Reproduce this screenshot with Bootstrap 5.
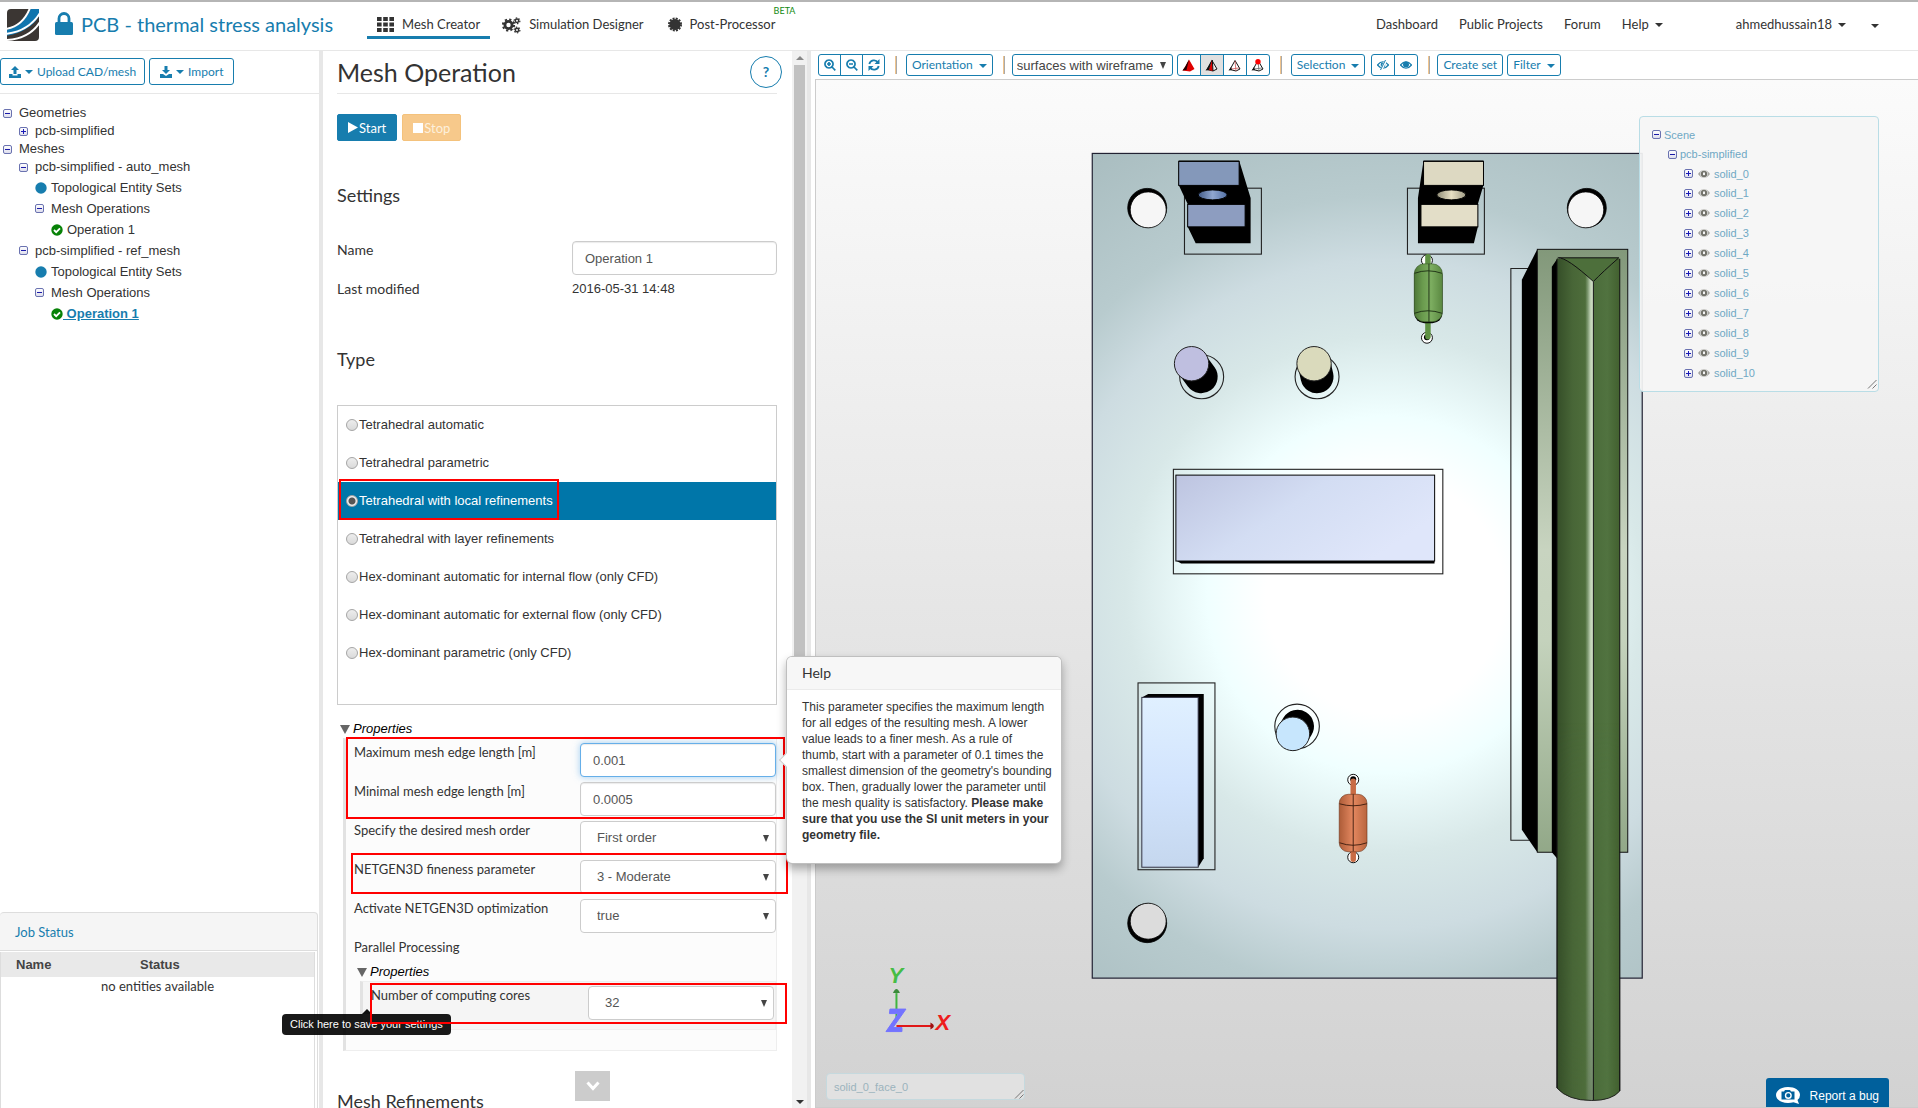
<!DOCTYPE html>
<html lang="en">
<head>
<meta charset="utf-8">
<meta name="viewport" content="width=device-width, initial-scale=1">
<title>PCB - thermal stress analysis</title>
<link href="https://cdn.jsdelivr.net/npm/bootstrap@5.3.0/dist/css/bootstrap.min.css" rel="stylesheet">
<style>
:root { --brand: #177dae; --rule: #e7e7e7; --ink: #333; }
body { font-family: "Liberation Sans", Arial, sans-serif; font-size: 13px; line-height: 18px; color: var(--ink); background: #fff; }
.lato { font-family: Lato, sans-serif; }
svg { display: block; flex: none; }
a { color: inherit; text-decoration: none; }
.crt { display: inline-block; width: 0; height: 0; border: 4px solid transparent; border-top-color: currentColor; border-bottom: 0; flex: none; }
.gap-caret { margin-left: 6px; margin-top: 2px; }

/* top bar */
.topbar { height: 51px; flex: none; border-top: 2px solid #b5b5b5; border-bottom: 1px solid var(--rule); font-size: 13px; line-height: 20px; padding: 0; }
.brand-mark { margin: 7px 0 0 7px; }
.proj { color: var(--brand); font-size: 20px; line-height: 24px; gap: 8px; margin: 10px 0 0 16px; height: 24px; }
.tab-list { margin-left: 34px; }
.tab-link { height: 37px; padding-top: 12px; gap: 8px; border-bottom: 3px solid transparent; position: relative; }
.tab-link svg { margin-top: 3px; }
.tab-link.active { border-color: var(--brand); padding-left: 10px; padding-right: 10px; }
.beta { position: absolute; right: -20px; top: 2px; font-size: 9px; line-height: 14px; color: #128a12; }
.usernav { gap: 21px; padding: 0 39px 8px 0; margin-top: 3px; }

/* outline buttons */
.btn-line { --bs-btn-color: var(--brand); --bs-btn-border-color: var(--brand); --bs-btn-bg: #fff; --bs-btn-border-radius: 3px; --bs-btn-hover-bg: #e7e7e7; --bs-btn-hover-color: var(--brand); --bs-btn-hover-border-color: var(--brand);
  --bs-btn-padding-x: 5px; --bs-btn-padding-y: 0px; --bs-btn-font-size: 12px; --bs-btn-line-height: 20px; font-family: Lato, sans-serif; display: inline-flex; align-items: center; justify-content: center; height: 22px; white-space: nowrap; }
.btn-line.tall { height: 27px; padding: 0 8px; gap: 4px; }
.btn-line.tall + .tall { padding: 0 10px; }
.btn-line.pressed { background: #e0e0e0; }
.btn-line.icon-only { width: 24px; }

/* columns */
.side { width: 319px; flex: none; }
.splitter { width: 4px; flex: none; background: var(--rule); }
.splitter i { width: 1px; height: 7px; background: #444; }
.tree { padding: 10px 0 0 3px; }
.tree-row { height: 18px; display: flex; align-items: center; }
.tall-row { height: 21px; }
.short-end { margin-bottom: 1px; }
.node { width: 16px; flex: none; }
.ind1 { padding-left: 16px; } .ind2 { padding-left: 32px; } .ind3 { padding-left: 48px; }
.side-tools { height: 43px; padding-top: 7px; border-bottom: 1px solid var(--rule); }
.job-box { border: 1px solid #ddd; border-left: 0; border-radius: 4px 4px 0 0; background: #f5f5f5; height: 196px; margin-right: 1px; }
.job-title { height: 38px; padding-left: 15px; font-size: 13px; line-height: 38px; color: var(--brand); border-bottom: 1px solid #ddd; }
.job-body { background: #fff; padding: 1px 2px 0 0; }
.job-frame { border: solid #ddd; border-width: 0 1px; }
.job-frame th { background: #e9e9e9; color: #444; padding: 0; height: 25px; }
.job-frame th:first-child { width: 139px; padding-left: 15px; }
.job-frame td { padding: 0; height: 18px; line-height: 18px; text-align: center; }

.panel { width: 469px; flex: none; padding: 0 15px 0 14px; position: relative; }
.panel-head { height: 43px; border-bottom: 1px solid var(--rule); }
.panel-head h1 { font-size: 25px; line-height: 42px; margin: 0; font-weight: 400; }
.btn-help { width: 32px; height: 32px; border-radius: 50%; border: 1px solid var(--brand); color: var(--brand); background: #fff; font-size: 14px; font-weight: 700; margin: 5px -5px 0 0; padding: 0; }
.run-row { margin-top: 20px; gap: 5px; }
.btn-run { --bs-btn-padding-x: 10px; --bs-btn-padding-y: 0px; --bs-btn-font-size: 13px; --bs-btn-line-height: 20px; --bs-btn-border-radius: 2px; height: 27px; display: inline-flex; align-items: center; gap: 1px; color: #fff; font-family: Lato, sans-serif; }
.btn-start { background: var(--brand); border-color: var(--brand); }
.btn-stop { background: #f7c98b !important; border-color: #f4c27c !important; opacity: 1 !important; color: #fdf0dc !important; }
h2.sec { font-size: 18px; line-height: 20px; font-weight: 400; margin: 0; }
.sec-settings { margin-top: 44px !important; }
.sec-type { margin-top: 30px !important; }
.sec-refine { margin-top: 40px !important; }
.settings { margin-top: 36px; }
.frow { display: grid; grid-template-columns: 235px 1fr; height: 39px; }
.frow label, .frow .flabel { font-family: Lato, sans-serif; font-size: 14px; line-height: 18px; }
.frow .form-control, .frow .form-select { height: 34px; font-size: 13px; line-height: 18px; color: #555; border: 1px solid #ccc; border-radius: 4px; padding: 7px 12px; box-shadow: inset 0 1px 1px rgba(0,0,0,.08); }
.frow .form-select { padding-left: 16px; box-shadow: none; background: #fff url("data:image/svg+xml,%3Csvg xmlns='http://www.w3.org/2000/svg' width='6' height='7'%3E%3Cpath d='M0 0H6L3 7Z' fill='%23444'/%3E%3C/svg%3E") no-repeat right 6px center; }
.frow .form-control.live { border-color: #66afe9; box-shadow: inset 0 1px 1px rgba(0,0,0,.08), 0 0 7px rgba(102,175,233,.6); }
.kinds { border: 1px solid #ccc; height: 300px; margin-top: 36px; }
.kinds label { display: flex; align-items: center; gap: 1px; height: 38px; padding-left: 8px; position: relative; }
.kinds label.on { background: #0076a9; color: #fff; }
.kinds input { appearance: none; width: 12px; height: 12px; margin: 0; border-radius: 50%; border: 1px solid #a5a5a5; background: linear-gradient(#ededed, #dadada); }
.kinds input:checked { background: radial-gradient(circle, #555 0 3px, #eee 4px); }
.redbox { position: absolute; border: 2px solid #f00; pointer-events: none; z-index: 30; }
.rb-kind { left: 1px; top: -3px; width: 220px; height: 41px; }
.legend-line { display: flex; align-items: center; gap: 3px; height: 19px; padding: 1px 0 0 3px; font-style: italic; color: #000; }
.panel > .legend-line { margin-top: 14px; }
.tri { width: 0; height: 0; border: 5px solid transparent; border-top: 9px solid #666; border-bottom: 0; }
.props { border: 1px solid #eee; border-left: 3px solid #e2e2e2; background: #fcfcfc; padding: 4px 0 20px 8px; margin-left: 6px; position: relative; }
.props .frow { grid-template-columns: 226px 1fr; }
.props .frow label, .sub-head { font-size: 13px; line-height: 18px; }
.sub-head { height: 24px; }
.props .props { background: #f5f5f5; padding: 4px 1px 4px 8px; }
.props .props .frow { grid-template-columns: 217px 1fr; }
.grp { position: relative; }
.rb-len { left: -8px; right: -9px; top: -6px; height: 82px; }
.rb-fine { left: -3px; right: -12px; top: -7px; height: 41px; }
.rb-core { left: -1px; right: -13px; top: -3px; height: 41px; }
.tip { position: absolute; left: -81px; top: 32px; background: rgba(0,0,0,.9); color: #fff; font-size: 11px; line-height: 15px; padding: 3px 8px; border-radius: 4px; white-space: nowrap; z-index: 20; }
.tip::before { content: ""; position: absolute; left: 80px; top: -5px; border: 5px solid transparent; border-top: 0; border-bottom-color: #111; }
.pop { position: absolute; left: 432px; top: -87px; width: 276px; background: #fff; border: 1px solid rgba(0,0,0,.25); border-radius: 6px; box-shadow: 0 5px 10px rgba(0,0,0,.3); z-index: 40; font-size: 12px; line-height: 16px; }
.pop h3 { font-size: 14px; line-height: 18px; font-weight: 400; margin: 0; padding: 7px 15px; background: #f7f7f7; border-bottom: 1px solid #ebebeb; border-radius: 5px 5px 0 0; }
.pop p { margin: 0; padding: 9px 4px 20px 15px; }
.pop::before { content: ""; position: absolute; left: -6px; top: 98px; width: 10px; height: 10px; transform: rotate(45deg); background: #fff; border: solid #ccc; border-width: 0 0 1px 1px; }
.pop::after { content: ""; position: absolute; left: 0; top: 90px; width: 10px; height: 26px; background: #fff; }
.more { position: absolute; left: 252px; bottom: 7px; width: 35px; height: 30px; border: 0; background: #ccc; padding: 0; display: flex; align-items: center; justify-content: center; }
.vscroll { width: 15px; flex: none; background: #f1f1f1; padding: 5px 2px 0; gap: 5px; }
.vscroll .thumb { width: 11px; flex: 0 0 693px; background: #c1c1c1; }
.up { border: 4px solid transparent; border-bottom-color: #888; border-top: 0; }

/* viewer */
.viewer { min-width: 0; padding-left: 4px; }
.tools { height: 28px; padding: 3px 0 0 3px; align-items: flex-start; }
.tools .icon-only.first { width: 23px; }
.vsep { width: 2px; height: 18px; margin: 2px 9px 0 10px; border-left: 1px solid #f0c48c; border-right: 1px solid #aaa; }
.vsep.tight { margin-right: 7px; }
.tools .form-select { width: 161px; height: 22px; border: 1px solid var(--brand); border-radius: 3px; padding: 1px 4px 0; font-size: 13px; line-height: 20px; color: #444; background: #fff url("data:image/svg+xml,%3Csvg xmlns='http://www.w3.org/2000/svg' width='6' height='7'%3E%3Cpath d='M0 0H6L3 7Z' fill='%23444'/%3E%3C/svg%3E") no-repeat right 6px center; }
.stage { border: 1px solid #ccc; border-right: 0; position: relative; min-height: 0; background: linear-gradient(#fbfbfb, #d2d2d2); overflow: hidden; }
.stage > svg { position: absolute; inset: 0; width: 100%; height: 100%; }
.stage text { font-family: "Liberation Sans", sans-serif; font-weight: 700; font-style: italic; }
.scene { position: absolute; right: 39px; top: 36px; width: 240px; height: 276px; padding: 8px 12px; border: 1px solid #b9dde6; border-radius: 4px; background: rgba(245,245,245,.93); color: #6fa8c4; font-size: 11px; }
.scene .tree-row { height: 20px; gap: 3px; }
.scene .tree-row:first-child { height: 19px; }
.scene .eye { margin: 0 1px 0 2px; }
.scene .grip { position: absolute; right: 1px; bottom: 2px; }
.pick { position: absolute; left: 10px; bottom: 7px; width: 199px; height: 27px; }
.pick textarea { width: 100%; height: 100%; resize: none; overflow: hidden; border: 1px solid #c5d9de; border-radius: 4px; background: #e1e1e1; color: #9bb3bd; font-size: 11px; line-height: 16px; padding: 5px 7px; display: block; }
.pick svg { position: absolute; right: 1px; bottom: 1px; }
.btn-bug { position: absolute; right: 29px; bottom: 0; height: 29px; border: 0; border-radius: 3px 3px 0 0; background: #00609c; color: #fff; font-size: 12px; padding: 6px 10px 0; display: flex; align-items: center; gap: 10px; }
</style>
<script src="https://cdn.jsdelivr.net/npm/bootstrap@5.3.0/dist/js/bootstrap.bundle.min.js"></script>
</head>
<body class="vh-100 overflow-hidden d-flex flex-column">

<svg width="0" height="0" class="position-absolute" aria-hidden="true">
  <defs>
    <linearGradient id="boxg" x1="0" y1="0" x2="0" y2="1"><stop offset="0" stop-color="#fff"/><stop offset="1" stop-color="#dcdcec"/></linearGradient>
    <symbol id="minus" viewBox="0 0 9 9"><rect x=".5" y=".5" width="8" height="8" rx="1.500" fill="url(#boxg)" stroke="#6a72b0"/><path d="M2 4.500h5" stroke="#1a1aa8"/></symbol>
    <symbol id="plus" viewBox="0 0 9 9"><rect x=".5" y=".5" width="8" height="8" rx="1.500" fill="url(#boxg)" stroke="#6a72b0"/><path d="M2 4.500h5M4.500 2v5" stroke="#1a1ab8"/></symbol>
    <symbol id="dot" viewBox="0 0 12 12"><circle cx="6" cy="6" r="5.700" fill="#177dae"/></symbol>
    <symbol id="okay" viewBox="0 0 12 12"><circle cx="6" cy="6" r="5.700" fill="#078207"/><path d="M3 6l2.200 2.200L9 4.400" fill="none" stroke="#fff" stroke-width="1.800"/></symbol>
    <symbol id="eye" viewBox="0 0 12 10"><path d="M0 5Q6-3 12 5Q6 13 0 5Z" fill="#a5a5a0"/><circle cx="6" cy="5" r="3.700" fill="#f4f4f4"/><circle cx="6" cy="5" r="3.200" fill="#73736b"/><rect x="5" y="3.500" width="2" height="2.600" fill="#f4f4f4"/></symbol>
    <symbol id="grip" viewBox="0 0 10 10"><path d="M1 9.500L9.500 1M5.500 9.500L9.500 5.500" stroke="#777" fill="none"/></symbol>
  </defs>
</svg>

<nav class="topbar lato d-flex">
  <a href="#" class="brand-mark" aria-label="Home">
    <svg width="32" height="32" viewBox="0 0 32 32"><defs><clipPath id="lg"><path d="M4 0H32V28Q32 32 28 32H0V4Q0 0 4 0Z"/></clipPath></defs><g clip-path="url(#lg)"><rect width="32" height="32" fill="#3b3633"/><path d="M-1 21Q17 17 24-1H33V5Q25 22-1 27Z" fill="#0f75ae"/><path d="M-1 20Q16 17 23-1M-1 25Q22 22 33 4M-1 31Q22 30 33 13" fill="none" stroke="#fff" stroke-width="2"/></g></svg>
  </a>
  <a href="#" class="proj d-flex">
    <svg width="18" height="24" viewBox="0 0 18 24"><path d="M4 11V6.500a5 5 0 0 1 10 0V11" fill="none" stroke="#177dae" stroke-width="2.800"/><rect y="10" width="18" height="13" rx="1.500" fill="#177dae"/></svg>
    <span>PCB - thermal stress analysis</span>
  </a>
  <div class="tab-list d-flex">
    <a href="#" class="tab-link active d-flex"><svg width="17" height="15" viewBox="0 0 17 15"><path d="M0 0h4.600v4H0zM6.200 0h4.600v4H6.200zM12.400 0H17v4h-4.600zM0 5.500h4.600v4H0zM6.200 5.500h4.600v4H6.200zM12.400 5.500H17v4h-4.600zM0 11h4.600v4H0zM6.200 11h4.600v4H6.200zM12.400 11H17v4h-4.600z" fill="#333"/></svg>Mesh Creator</a>
    <a href="#" class="tab-link d-flex ms-2 ps-1"><svg width="19" height="17" viewBox="0 0 19 17"><g fill="none" stroke="#333"><circle cx="6.500" cy="8" r="3.600" stroke-width="2.800"/><circle cx="6.500" cy="8" r="5.600" stroke-width="2" stroke-dasharray="2.200 2.200"/><circle cx="15" cy="3.800" r="1.700" stroke-width="1.500"/><circle cx="15" cy="3.800" r="2.900" stroke-width="1.200" stroke-dasharray="1.500 1.500"/><circle cx="15" cy="13" r="1.700" stroke-width="1.500"/><circle cx="15" cy="13" r="2.900" stroke-width="1.200" stroke-dasharray="1.500 1.500"/></g></svg>Simulation Designer</a>
    <a href="#" class="tab-link d-flex ms-4"><svg width="14" height="15" viewBox="0 0 14 15"><circle cx="7" cy="7.500" r="5.500" fill="#333"/><circle cx="7" cy="7.500" r="6" fill="none" stroke="#333" stroke-width="2" stroke-dasharray="2 1.140"/></svg>Post-Processor<span class="beta">BETA</span></a>
  </div>
  <div class="usernav d-flex ms-auto align-items-center">
    <a href="#">Dashboard</a><a href="#">Public Projects</a><a href="#">Forum</a>
    <a href="#" class="d-flex align-items-center">Help<span class="crt gap-caret"></span></a>
    <a href="#" class="d-flex align-items-center ms-5 ps-1">ahmedhussain18<span class="crt gap-caret"></span></a>
    <a href="#" class="d-flex ms-1" aria-label="Menu"><span class="crt mt-1"></span></a>
  </div>
</nav>

<main class="d-flex flex-grow-1" style="min-height:0">

  <aside class="side d-flex flex-column">
    <div class="side-tools d-flex gap-1">
      <button class="btn btn-line tall" type="button"><svg width="12" height="12" viewBox="0 0 12 12"><path d="M6 0l4 4H7.500v4h-3V4H2z M0 8h3.500v1.500h5V8H12v4H0z" fill="#177dae"/></svg><span class="crt"></span>Upload CAD/mesh</button>
      <button class="btn btn-line tall" type="button"><svg width="12" height="12" viewBox="0 0 12 12"><path d="M6 8L2 4h2.500V0h3v4H10z M0 8h3l3 2 3-2h3v4H0z" fill="#177dae"/></svg><span class="crt"></span>Import</button>
    </div>
    <div class="tree flex-grow-1">
      <div class="tree-row"><span class="node"><svg width="9" height="9"><use href="#minus"/></svg></span>Geometries</div>
      <div class="tree-row ind1"><span class="node"><svg width="9" height="9"><use href="#plus"/></svg></span>pcb-simplified</div>
      <div class="tree-row"><span class="node"><svg width="9" height="9"><use href="#minus"/></svg></span>Meshes</div>
      <div class="tree-row ind1 short-end"><span class="node"><svg width="9" height="9"><use href="#minus"/></svg></span>pcb-simplified - auto_mesh</div>
      <div class="tree-row tall-row ind2"><span class="node"><svg width="12" height="12"><use href="#dot"/></svg></span>Topological Entity Sets</div>
      <div class="tree-row tall-row ind2"><span class="node"><svg width="9" height="9"><use href="#minus"/></svg></span>Mesh Operations</div>
      <div class="tree-row tall-row ind3"><span class="node"><svg width="12" height="12"><use href="#okay"/></svg></span>Operation 1</div>
      <div class="tree-row tall-row ind1"><span class="node"><svg width="9" height="9"><use href="#minus"/></svg></span>pcb-simplified - ref_mesh</div>
      <div class="tree-row tall-row ind2"><span class="node"><svg width="12" height="12"><use href="#dot"/></svg></span>Topological Entity Sets</div>
      <div class="tree-row tall-row ind2"><span class="node"><svg width="9" height="9"><use href="#minus"/></svg></span>Mesh Operations</div>
      <a href="#" class="tree-row tall-row ind3 fw-bold" style="color:var(--brand)"><svg width="12" height="12"><use href="#okay"/></svg><span class="text-decoration-underline" style="white-space:pre"> Operation 1</span></a>
    </div>
    <section class="job-box">
      <div class="job-title lato">Job Status</div>
      <div class="job-body h-100"><div class="job-frame h-100">
        <table class="w-100">
          <thead><tr><th>Name</th><th>Status</th></tr></thead>
          <tbody><tr><td colspan="2" class="lato">no entities available</td></tr></tbody>
        </table>
      </div></div>
    </section>
  </aside>
  <div class="splitter d-flex align-items-center justify-content-center gap-1"><i></i><i></i></div>

  <section class="panel">
    <div class="panel-head lato d-flex justify-content-between">
      <h1>Mesh Operation</h1>
      <button class="btn-help" type="button">?</button>
    </div>
    <div class="run-row d-flex">
      <button class="btn btn-run btn-start" type="button"><svg width="10" height="11" viewBox="0 0 10 11"><path d="M0 0L10 5.500L0 11Z" fill="#fff"/></svg>Start</button>
      <button class="btn btn-run btn-stop" type="button" disabled><svg width="10" height="10"><rect width="10" height="10" fill="#fff"/></svg>Stop</button>
    </div>
    <h2 class="sec sec-settings lato">Settings</h2>
    <div class="settings">
      <div class="frow"><label for="nm">Name</label><input id="nm" class="form-control" value="Operation 1"></div>
      <div class="frow"><span class="flabel">Last modified</span><span>2016-05-31 14:48</span></div>
    </div>
    <h2 class="sec sec-type lato">Type</h2>
    <div class="kinds">
      <label><input type="radio" name="kind">Tetrahedral automatic</label>
      <label><input type="radio" name="kind">Tetrahedral parametric</label>
      <label class="on"><input type="radio" name="kind" checked>Tetrahedral with local refinements<span class="redbox rb-kind"></span></label>
      <label><input type="radio" name="kind">Tetrahedral with layer refinements</label>
      <label><input type="radio" name="kind">Hex-dominant automatic for internal flow (only CFD)</label>
      <label><input type="radio" name="kind">Hex-dominant automatic for external flow (only CFD)</label>
      <label><input type="radio" name="kind">Hex-dominant parametric (only CFD)</label>
    </div>
    <div class="legend-line"><span class="tri"></span>Properties</div>
    <div class="props">
      <div class="grp">
        <div class="frow"><label for="mx">Maximum mesh edge length [m]</label><input id="mx" class="form-control live" value="0.001"></div>
        <div class="frow"><label for="mn">Minimal mesh edge length [m]</label><input id="mn" class="form-control" value="0.0005"></div>
        <span class="redbox rb-len"></span>
        <div class="pop" role="tooltip"><h3 class="lato">Help</h3><p>This parameter specifies the maximum length<br>for all edges of the resulting mesh. A lower<br>value leads to a finer mesh. As a rule of<br>thumb, start with a parameter of 0.1 times the<br>smallest dimension of the geometry's bounding<br>box. Then, gradually lower the parameter until<br>the mesh quality is satisfactory. <b>Please make<br>sure that you use the SI unit meters in your<br>geometry file.</b></p></div>
      </div>
      <div class="frow"><label for="od">Specify the desired mesh order</label><select id="od" class="form-select"><option>First order</option></select></div>
      <div class="grp">
        <div class="frow"><label for="fn">NETGEN3D fineness parameter</label><select id="fn" class="form-select"><option>3 - Moderate</option></select></div>
        <span class="redbox rb-fine"></span>
      </div>
      <div class="frow"><label for="op">Activate NETGEN3D optimization</label><select id="op" class="form-select"><option>true</option></select></div>
      <div class="sub-head lato">Parallel Processing</div>
      <div class="legend-line"><span class="tri"></span>Properties</div>
      <div class="props">
        <div class="grp">
          <div class="frow"><label for="cr">Number of computing cores</label><select id="cr" class="form-select"><option>32</option></select></div>
          <span class="redbox rb-core"></span>
        </div>
        <div class="tip" role="tooltip">Click here to save your settings</div>
      </div>
    </div>
    <h2 class="sec sec-refine lato">Mesh Refinements</h2>
    <button class="more" type="button" aria-label="More"><svg width="14" height="10" viewBox="0 0 14 10"><path d="M1.500 1.500L7 7.500L12.500 1.500" fill="none" stroke="#fff" stroke-width="3"/></svg></button>
  </section>
  <div class="vscroll d-flex flex-column align-items-center">
    <span class="up"></span><span class="thumb"></span><span class="crt mt-auto mb-1"></span>
  </div>
  <div class="splitter d-flex align-items-center justify-content-center gap-1"><i></i><i></i></div>

  <section class="viewer d-flex flex-column flex-grow-1">
    <div class="tools d-flex">
      <div class="btn-group">
        <button class="btn btn-line icon-only first" type="button" aria-label="Zoom in"><svg width="12" height="12" viewBox="0 0 12 12"><path d="M5 1a4 4 0 1 0 .01 0M8 8l3.300 3.300M3 5h4M5 3v4" fill="none" stroke="#177dae" stroke-width="1.700"/></svg></button>
        <button class="btn btn-line icon-only first" type="button" aria-label="Zoom out"><svg width="12" height="12" viewBox="0 0 12 12"><path d="M5 1a4 4 0 1 0 .01 0M8 8l3.300 3.300M3 5h4" fill="none" stroke="#177dae" stroke-width="1.700"/></svg></button>
        <button class="btn btn-line icon-only first" type="button" aria-label="Reset view"><svg width="12" height="12" viewBox="0 0 12 12"><path d="M1.300 5A4.800 4.800 0 0 1 10 3.500M10.700 7A4.800 4.800 0 0 1 2 8.500" fill="none" stroke="#177dae" stroke-width="1.800"/><path d="M11.500 0v5h-5zM.5 12V7h5z" fill="#177dae"/></svg></button>
      </div>
      <span class="vsep"></span>
      <button class="btn btn-line" type="button">Orientation<span class="crt gap-caret"></span></button>
      <span class="vsep tight"></span>
      <select class="form-select" aria-label="Render mode"><option>surfaces with wireframe</option></select>
      <div class="btn-group ms-1">
        <button class="btn btn-line icon-only" type="button" aria-label="Pick volumes"><svg width="13" height="13" viewBox="0 0 13 13"><path d="M7 .5L3 8L.5 11.500L8 12.500L12.500 10Z" fill="#e00000"/><path d="M7 .5L3 8L.5 11.500L4.500 11Z" fill="#200"/></svg></button>
        <button class="btn btn-line icon-only pressed" type="button" aria-label="Pick faces"><svg width="13" height="13" viewBox="0 0 13 13"><path d="M7 1.500L2 10.500L8 12L12 10Z" fill="#eee" stroke="#111"/><path d="M7 1L3.500 11L8 12Z" fill="#d00"/><path d="M7 .5L3 8L.5 11.500L4 11Z" fill="#111"/><path d="M7.300 1L8 12" stroke="#111"/></svg></button>
        <button class="btn btn-line icon-only" type="button" aria-label="Pick edges"><svg width="13" height="13" viewBox="0 0 13 13"><path d="M7 1.500L2 10.500L8 12L12 10Z" fill="#fff" stroke="#111"/><path d="M7 2L8 12M3 10L11 9" stroke="#c55" stroke-width=".8"/><path d="M3 8L.5 11.500L4 11Z" fill="#111"/></svg></button>
        <button class="btn btn-line icon-only" type="button" aria-label="Pick vertices"><svg width="13" height="13" viewBox="0 0 13 13"><path d="M7 1.500L2 10.500L8 12L12 10Z" fill="#fff" stroke="#111"/><path d="M7 2L8 12M3 10L11 9" stroke="#666" stroke-width=".8"/><path d="M3 8L.5 11.500L4 11Z" fill="#111"/><circle cx="7" cy="2.700" r="2.700" fill="#f00"/></svg></button>
      </div>
      <span class="vsep"></span>
      <button class="btn btn-line" type="button">Selection<span class="crt gap-caret"></span></button>
      <div class="btn-group" style="margin-left:6px">
        <button class="btn btn-line icon-only" type="button" aria-label="Hide"><svg width="12" height="10" viewBox="0 0 12 10"><path d="M.5 5Q6-1.500 11.500 5Q6 11.500 .5 5Z" fill="none" stroke="#177dae" stroke-width="1.200"/><circle cx="6" cy="5" r="2.400" fill="#177dae"/><path d="M9 0L4 10" stroke="#fff" stroke-width="2.500"/><path d="M8.500 0L3.500 10" stroke="#177dae"/></svg></button>
        <button class="btn btn-line icon-only" type="button" aria-label="Show"><svg width="12" height="10" viewBox="0 0 12 10"><path d="M.5 5Q6-1.500 11.500 5Q6 11.500 .5 5Z" fill="none" stroke="#177dae" stroke-width="1.200"/><circle cx="6" cy="4.600" r="3" fill="#177dae"/></svg></button>
      </div>
      <span class="vsep tight"></span>
      <button class="btn btn-line" type="button">Create set</button>
      <button class="btn btn-line ms-1" type="button">Filter<span class="crt gap-caret"></span></button>
    </div>

    <div class="stage flex-grow-1">
      <svg viewBox="816 80 1102 1028" preserveAspectRatio="xMidYMin meet" role="img" aria-label="PCB model">
        <defs>
          <radialGradient id="plate" gradientUnits="userSpaceOnUse" cx="1385" cy="595" r="540"><stop offset="0" stop-color="#fff"/><stop offset=".22" stop-color="#fff"/><stop offset=".33" stop-color="#f0ffff"/><stop offset=".48" stop-color="#d8e8e8"/><stop offset=".62" stop-color="#cddce1"/><stop offset=".74" stop-color="#b8cbce"/><stop offset="1" stop-color="#a8bcbf"/></radialGradient>
          <linearGradient id="tube"><stop offset="0" stop-color="#354e28"/><stop offset=".25" stop-color="#486637"/><stop offset=".45" stop-color="#4e6d3b"/><stop offset=".49" stop-color="#7d9870"/><stop offset=".53" stop-color="#bccdb1"/><stop offset=".58" stop-color="#dbe8d2"/><stop offset=".585" stop-color="#4b6c3a"/><stop offset=".8" stop-color="#517340"/><stop offset="1" stop-color="#42602f"/></linearGradient>
          <linearGradient id="tubelow"><stop offset="0" stop-color="#354e28"/><stop offset=".25" stop-color="#486637"/><stop offset=".45" stop-color="#4e6d3b"/><stop offset=".5" stop-color="#66805a"/><stop offset=".58" stop-color="#71886a"/><stop offset=".585" stop-color="#4b6c3a"/><stop offset=".8" stop-color="#517340"/><stop offset="1" stop-color="#42602f"/></linearGradient>
          <linearGradient id="fade" x1="0" y1="0" x2="0" y2="1"><stop offset="0" stop-color="#000"/><stop offset=".55" stop-color="#000"/><stop offset="1" stop-color="#fff"/></linearGradient>
          <mask id="lowm" maskUnits="userSpaceOnUse" x="1550" y="250" width="80" height="860"><rect x="1550" y="250" width="80" height="860" fill="url(#fade)"/></mask>
          <linearGradient id="slab" x1="0" y1="0" x2="0" y2="1"><stop offset="0" stop-color="#82987a"/><stop offset=".5" stop-color="#c8d4c0"/><stop offset=".65" stop-color="#c4d2bc"/><stop offset="1" stop-color="#92a888"/></linearGradient>
          <linearGradient id="chip" x1="0" y1="0" x2="1" y2=".5"><stop offset="0" stop-color="#bdc4e0"/><stop offset=".5" stop-color="#d3ddf3"/><stop offset="1" stop-color="#dfe6fa"/></linearGradient>
          <linearGradient id="chip2" x1="0" y1="0" x2="0" y2="1"><stop offset="0" stop-color="#e0f0ff"/><stop offset=".5" stop-color="#d2e4fd"/><stop offset="1" stop-color="#c5d7ee"/></linearGradient>
          <linearGradient id="gr"><stop offset="0" stop-color="#4d7637"/><stop offset=".3" stop-color="#6a9b4e"/><stop offset=".6" stop-color="#7cad60"/><stop offset="1" stop-color="#5a8841"/></linearGradient>
          <linearGradient id="or"><stop offset="0" stop-color="#ad5c38"/><stop offset=".5" stop-color="#e48860"/><stop offset="1" stop-color="#b9653e"/></linearGradient>
          <linearGradient id="hb"><stop offset="0" stop-color="#425b88"/><stop offset=".5" stop-color="#90a7d0"/><stop offset="1" stop-color="#5270a4"/></linearGradient>
          <linearGradient id="hy"><stop offset="0" stop-color="#918e78"/><stop offset=".5" stop-color="#e8e0c4"/><stop offset="1" stop-color="#a09c86"/></linearGradient>
        </defs>
        <rect x="1092" y="153.500" width="550.500" height="825.500" fill="url(#plate)" stroke="#223" stroke-width="1.200"/>
        <g stroke="#000" stroke-width=".8">
          <circle cx="1147" cy="208" r="19.500"/><circle cx="1148" cy="210" r="18" fill="#f6f6f6"/>
          <circle cx="1587" cy="208" r="19.500"/><circle cx="1586" cy="210" r="18" fill="#f6f6f6"/>
          <circle cx="1147" cy="924" r="19.500"/><circle cx="1148" cy="922" r="18" fill="#dcdcdc"/>
        </g>
        <g fill="none" stroke="#222" stroke-width="1.100">
          <rect x="1184.300" y="188.300" width="77" height="66"/><rect x="1407.500" y="188.300" width="77" height="66"/>
          <rect x="1173.200" y="469.700" width="269.700" height="104.600"/><rect x="1137.800" y="683.500" width="77" height="187"/>
          <path d="M1530 268.700H1511V841H1530"/>
          <circle cx="1201.500" cy="377" r="22"/><circle cx="1317" cy="377" r="22"/><circle cx="1297" cy="727" r="22.300"/>
        </g>
        <path d="M1178.500 160.700H1239L1250.500 198V243.500H1195.500L1187.500 227V204L1178.500 185Z"/>
        <path d="M1423.600 160.700H1483.600V185L1478 204V227L1474 243.500H1418V198Z"/>
        <g stroke="#000">
          <rect x="1178.500" y="161.500" width="60.500" height="24" fill="#8498ba"/><rect x="1187.500" y="204.500" width="57.500" height="22.500" fill="#8d9dc0"/>
          <rect x="1423.600" y="161.500" width="60" height="24" fill="#ddd9c2"/><rect x="1421" y="204.500" width="57" height="22.500" fill="#e3dec8"/>
          <ellipse cx="1212.500" cy="195" rx="14.500" ry="5" fill="url(#hb)"/><ellipse cx="1451.400" cy="195" rx="14.500" ry="5" fill="url(#hy)"/>
        </g>
        <path d="M1191.400 364L1201 377" stroke="#000" stroke-width="33" stroke-linecap="round"/>
        <path d="M1314 364L1317 377" stroke="#000" stroke-width="33" stroke-linecap="round"/>
        <path d="M1292.800 734.500L1297.400 727" stroke="#000" stroke-width="33" stroke-linecap="round"/>
        <g stroke="#222"><circle cx="1191.400" cy="364" r="17.200" fill="#bfbfe0"/><circle cx="1314" cy="364" r="17.200" fill="#dadabc"/><circle cx="1292.800" cy="734.500" r="16.800" fill="#c7e6fd"/></g>
        <path d="M1175.700 561L1181 564H1434.600V561Z"/>
        <rect x="1175.700" y="475.500" width="259" height="86" fill="url(#chip)" stroke="#000"/>
        <path d="M1141.600 698L1148 694.500H1203.600V859L1198 868Z"/>
        <rect x="1141.600" y="698" width="56.400" height="170" fill="url(#chip2)" stroke="#334"/>
        <g>
          <circle cx="1427" cy="260.500" r="5.500" fill="#fff" stroke="#111"/><circle cx="1427" cy="338" r="5.500" fill="#fff" stroke="#111"/><circle cx="1427" cy="337.500" r="3"/>
          <path d="M1428 257v8M1428 321v16" stroke="#5e9143" stroke-width="5.500" stroke-linecap="round"/>
          <rect x="1414.300" y="265" width="28.200" height="58.500" rx="10"/>
          <rect x="1414.300" y="264" width="28.200" height="58" rx="10" fill="url(#gr)" stroke="#3b5b2a" stroke-width=".6"/>
          <path d="M1414.500 273.500Q1428 268.500 1442 273.500M1414.500 313.500Q1428 308.500 1442 313.500M1429 264v58" fill="none" stroke="#1b2b12" stroke-width=".9"/>
        </g>
        <g>
          <circle cx="1353.200" cy="780.500" r="5.500" fill="#fff" stroke="#111"/><circle cx="1353.200" cy="858" r="5.500" fill="#fff" stroke="#111"/><circle cx="1353.200" cy="780" r="3"/>
          <path d="M1353.200 782v12M1353.200 850v10" stroke="#c96c45" stroke-width="5.500" stroke-linecap="round"/>
          <rect x="1339.200" y="795" width="27.800" height="57.500" rx="9" fill="url(#or)" stroke="#6b3319" stroke-width=".6"/>
          <path d="M1339.500 804.500Q1353 808.500 1367 804.500M1339.500 843.500Q1353 848.500 1367 843.500M1353.200 795v57" fill="none" stroke="#3a1a0c" stroke-width=".9"/>
        </g>
        <path d="M1537.500 249.300L1522 280V830.500L1537.500 853Z"/>
        <rect x="1537.500" y="249.500" width="90.500" height="603.500" fill="url(#slab)" stroke="#111"/>
        <path d="M1558.500 257.500L1552 267V853L1558 860V257Z"/>
        <path d="M1557.200 259H1620V1092Q1612 1101.500 1592 1101.500Q1568 1101.500 1557.200 1089Z" fill="url(#tube)"/>
        <path d="M1557.200 259H1620V1092Q1612 1101.500 1592 1101.500Q1568 1101.500 1557.200 1089Z" fill="url(#tubelow)" mask="url(#lowm)" stroke="#222"/>
        <path d="M1558.500 258Q1567 257.500 1593.600 281.700Q1603 272 1619 258Z" fill="#4d6f3b" stroke="#111"/>
        <path d="M1593.600 281.700V1101M1557.200 259V1089M1620 259V1092" stroke="#111" fill="none"/>
        <path d="M896 1020V994" stroke="#3fb53f" stroke-width="2"/><path d="M892.500 994Q896 986 899.500 994Z" fill="#3a8a3a"/>
        <path d="M896 1027H932" stroke="#e01818" stroke-width="2"/><path d="M930 1023.500Q937 1027 930 1030.500Z" fill="#a01010"/>
        <text x="888" y="984" font-size="22" fill="#45bd45">Y</text>
        <text x="935" y="1031" font-size="22" fill="#ee1c1c">X</text>
        <path d="M889.500 1010H905.500L892.500 1028.500H901.500V1032.500H885.500L898 1014.500H889Z" fill="#7373ff" stroke="#7373ff"/>
      </svg>

      <div class="scene">
        <div class="tree-row"><svg width="9" height="9"><use href="#minus"/></svg>Scene</div>
        <div class="tree-row ind1"><svg width="9" height="9"><use href="#minus"/></svg>pcb-simplified</div>
        <div id="solids"></div>
        <svg class="grip" width="10" height="10"><use href="#grip"/></svg>
      </div>
      <div class="pick"><textarea aria-label="Picked entity">solid_0_face_0</textarea><svg width="10" height="10"><use href="#grip"/></svg></div>
      <button class="btn-bug" type="button"><svg width="24" height="17" viewBox="0 0 24 17"><path d="M12 0C19 0 24 3.500 24 8Q24 11 21.500 13L23 17L17.500 15.200Q15 16 12 16C5 16 0 12.500 0 8S5 0 12 0Z" fill="#fff"/><path d="M5.500 4.500H8L9 3H14L15 4.500H18.500V12.500H5.500Z" fill="#00609c"/><circle cx="12.300" cy="8.400" r="2.800" fill="none" stroke="#fff" stroke-width="1.400"/></svg>Report a bug</button>
    </div>
  </section>
</main>

<script>
const rows = [];
for (let i = 0; i <= 10; i++) {
  rows.push(`<div class="tree-row ind2"><svg width="9" height="9"><use href="#plus"/></svg><svg width="12" height="10" class="eye"><use href="#eye"/></svg>solid_${i}</div>`);
}
document.getElementById('solids').innerHTML = rows.join('');
</script>
</body>
</html>
